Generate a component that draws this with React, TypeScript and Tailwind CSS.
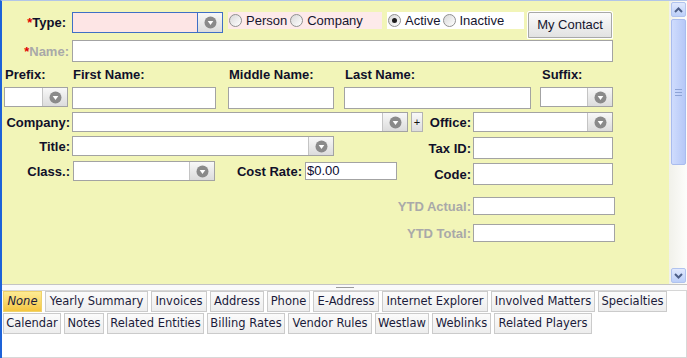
import React from "react";

const label = "whitespace-nowrap text-[13px] font-bold leading-[15px] text-[#10102a]";
const grayLabel = "whitespace-nowrap text-[13px] font-bold leading-[15px] text-[#a9a9a9]";

function Arrow() {
  return (
    <svg width="13" height="13" viewBox="0 0 13 13">
      <circle cx="6.5" cy="6.5" r="6" fill="#8a8a8a" />
      <path d="M3.7 5.1h5.6L6.5 9.1z" fill="#ffffff" />
    </svg>
  );
}

function Select({ className, blue }: { className: string; blue?: boolean }) {
  return (
    <div
      className={`flex shrink-0 border ${
        blue ? "border-[#3f6fc6] bg-[#fde5e5]" : "border-[#a3a3a3] bg-white"
      } ${className}`}
    >
      <div className="flex-1" />
      <div
        className={`flex w-[25px] items-center justify-center border-l bg-gradient-to-b from-[#f8f8f8] to-[#dcdcdc] ${
          blue ? "border-[#3f6fc6]" : "border-[#c4c4c4]"
        }`}
      >
        <Arrow />
      </div>
    </div>
  );
}

function Field({ className, children }: { className: string; children?: React.ReactNode }) {
  return (
    <div className={`shrink-0 border border-[#a3a3a3] bg-white ${className}`}>{children}</div>
  );
}

function Radio({ checked }: { checked?: boolean }) {
  return (
    <span className="flex h-[13px] w-[13px] shrink-0 items-center justify-center rounded-full border border-[#909090] bg-gradient-to-br from-[#d8d8d8] to-[#ffffff]">
      {checked && <span className="h-[5px] w-[5px] rounded-full bg-[#1e1e1e]" />}
    </span>
  );
}

function ScrollBtn({ up }: { up?: boolean }) {
  return (
    <div className="flex h-[15px] items-center justify-center rounded-[2px] border border-[#b1c3ee] bg-gradient-to-b from-[#e1e9fd] to-[#bccff9]">
      <svg width="9" height="6" viewBox="0 0 9 6">
        <path
          d={up ? "M1 5L4.5 1.5L8 5" : "M1 1L4.5 4.5L8 1"}
          fill="none"
          stroke="#4d5f88"
          strokeWidth="2"
        />
      </svg>
    </div>
  );
}

function Scrollbar() {
  return (
    <div className="flex w-[18px] shrink-0 flex-col bg-gradient-to-r from-[#f1f1ea] to-[#fdfdfb] py-[1px] pl-[2px] pr-[1px]">
      <ScrollBtn up />
      <div className="mt-[2px] flex h-[146px] flex-col items-center justify-center gap-[2px] rounded-[2px] border border-[#a9bcee] bg-gradient-to-r from-[#cfdcfd] to-[#b6c8f7]">
        <span className="h-px w-[7px] bg-[#8da3d6]" />
        <span className="h-px w-[7px] bg-[#8da3d6]" />
        <span className="h-px w-[7px] bg-[#8da3d6]" />
      </div>
      <div className="flex-1" />
      <ScrollBtn />
    </div>
  );
}

const row1 = [
  { t: "None", w: "w-[39px]", on: true },
  { t: "Yearly Summary", w: "w-[103px]" },
  { t: "Invoices", w: "w-[56px]" },
  { t: "Address", w: "w-[54px]" },
  { t: "Phone", w: "w-[43px]" },
  { t: "E-Address", w: "w-[66px]" },
  { t: "Internet Explorer", w: "w-[106px]" },
  { t: "Involved Matters", w: "w-[104px]" },
  { t: "Specialties", w: "w-[69px]" },
];

const row2 = [
  { t: "Calendar", w: "w-[58px]" },
  { t: "Notes", w: "w-[40px]" },
  { t: "Related Entities", w: "w-[97px]" },
  { t: "Billing Rates", w: "w-[78px]" },
  { t: "Vendor Rules", w: "w-[84px]" },
  { t: "Westlaw", w: "w-[54px]" },
  { t: "Weblinks", w: "w-[59px]" },
  { t: "Related Players", w: "w-[98px]" },
];

function Tab({ t, w, on }: { t: string; w: string; on?: boolean }) {
  return (
    <div
      className={`flex h-[21px] shrink-0 items-center justify-center whitespace-nowrap border text-[11.5px] text-[#1b1b3a] ${w} ${
        on
          ? "border-[#efd26a] bg-gradient-to-b from-[#fdeb93] to-[#f5c63e] italic"
          : "border-[#cbcbcb] bg-gradient-to-b from-[#fbfbfb] to-[#ededed]"
      }`}
    >
      {t}
    </div>
  );
}

export default function App() {
  return (
    <div className="flex h-[358px] w-[687px] flex-col overflow-hidden border-l-2 border-t border-l-[#1d62d8] border-t-[#b3c6e8] bg-white font-['Liberation_Sans',Arial,sans-serif]">
      <div className="flex h-[283px] shrink-0">
        <div className="flex-1 bg-[#f2f5b8]">
          {/* type row */}
          <div className="mt-[10px] flex h-[28px] items-start">
            <div className={`${label} mt-[1px] w-[64px] text-right leading-[21px]`}>
              <span className="text-[#e00000]">*</span>Type:
            </div>
            <Select blue className="ml-[6px] mt-[1px] h-[21px] w-[151px]" />
            <div className="ml-[5px] mt-[1px] flex h-[17px] w-[154px] items-center bg-[#fdeaea] pl-[1px] text-[13px] text-[#15152e]">
              <Radio />
              <span className="ml-[4px]">Person</span>
              <span className="ml-[3px]" />
              <Radio />
              <span className="ml-[4px]">Company</span>
            </div>
            <div className="ml-[5px] mt-[1px] flex h-[17px] w-[137px] items-center bg-white pl-[1px] text-[13px] text-[#15152e]">
              <Radio checked />
              <span className="ml-[4px]">Active</span>
              <span className="ml-[3px]" />
              <Radio />
              <span className="ml-[3px]">Inactive</span>
            </div>
            <div className="ml-[3px] h-[28px] w-[86px] rounded-t-[2px] border border-white p-0">
              <div className="flex h-full items-center justify-center rounded-t-[2px] border border-[#a8a8a8] bg-gradient-to-b from-[#fbfbfb] to-[#e2e2e2] text-[13px] text-[#15152e]">
                My Contact
              </div>
            </div>
          </div>

          {/* name row */}
          <div className="mt-[1px] flex items-center">
            <div className={`${grayLabel} w-[67px] text-right`}>
              <span className="text-[#e00000]">*</span>Name:
            </div>
            <Field className="ml-[3px] h-[22px] w-[541px]" />
          </div>

          {/* name parts */}
          <div className="mt-[5px] flex items-start">
            <div className="ml-[2px] flex w-[64px] flex-col">
              <div className={`${label} pl-[1px]`}>Prefix:</div>
              <Select className="mt-[5px] h-[20px] w-[64px]" />
            </div>
            <div className="ml-[4px] flex w-[144px] flex-col">
              <div className={`${label} pl-[1px]`}>First Name:</div>
              <Field className="mt-[5px] h-[22px] w-[144px]" />
            </div>
            <div className="ml-[12px] flex w-[106px] flex-col">
              <div className={`${label} pl-[1px]`}>Middle Name:</div>
              <Field className="mt-[5px] h-[22px] w-[106px]" />
            </div>
            <div className="ml-[10px] flex w-[187px] flex-col">
              <div className={`${label} pl-[1px]`}>Last Name:</div>
              <Field className="mt-[5px] h-[22px] w-[187px]" />
            </div>
            <div className="ml-[9px] flex w-[73px] flex-col">
              <div className={`${label} pl-[2px]`}>Suffix:</div>
              <Select className="mt-[5px] h-[20px] w-[73px]" />
            </div>
          </div>

          <div className="mt-[3px] flex items-start">
            {/* left block */}
            <div className="flex w-[423px] shrink-0 flex-col">
              <div className="flex h-[20px] items-center">
                <div className={`${label} w-[68px] text-right`}>Company:</div>
                <Select className="ml-[2px] h-[20px] w-[336px]" />
                <div className="ml-[3px] flex h-[20px] w-[12px] items-center justify-center border border-[#b3b3b3] bg-gradient-to-b from-[#f9f9f9] to-[#dedede] text-[11px] leading-none text-[#111]">
                  +
                </div>
              </div>
              <div className="mt-[4px] flex h-[20px] items-center">
                <div className={`${label} w-[68px] text-right`}>Title:</div>
                <Select className="ml-[2px] h-[20px] w-[262px]" />
              </div>
              <div className="mt-[5px] flex h-[20px] items-center">
                <div className={`${label} w-[68px] text-right`}>Class.:</div>
                <Select className="ml-[3px] h-[20px] w-[142px]" />
                <div className={`${label} w-[87px] text-right`}>Cost Rate:</div>
                <Field className="ml-[3px] h-[18px] w-[92px] pl-[1px] text-[13px] leading-[16px] text-[#0c0c30]">
                  $0.00
                </Field>
              </div>
            </div>

            {/* right block */}
            <div className="flex flex-col">
              <div className="flex h-[20px] items-center">
                <div className={`${label} flex w-[46px] justify-end`}>Office:</div>
                <Select className="ml-[2px] h-[20px] w-[140px]" />
              </div>
              <div className="mt-[5px] flex h-[22px] items-center">
                <div className={`${label} flex w-[46px] justify-end`}>Tax ID:</div>
                <Field className="ml-[2px] h-[22px] w-[140px]" />
              </div>
              <div className="mt-[4px] flex h-[22px] items-center">
                <div className={`${label} flex w-[46px] justify-end`}>Code:</div>
                <Field className="ml-[2px] h-[22px] w-[140px]" />
              </div>
              <div className="mt-[12px] flex h-[18px] items-center">
                <div className={`${grayLabel} flex w-[46px] justify-end`}>
                  <span>YTD Actual:</span>
                </div>
                <Field className="ml-[2px] h-[18px] w-[142px]" />
              </div>
              <div className="mt-[9px] flex h-[18px] items-center">
                <div className={`${grayLabel} flex w-[46px] justify-end`}>
                  <span>YTD Total:</span>
                </div>
                <Field className="ml-[2px] h-[18px] w-[142px]" />
              </div>
            </div>
          </div>
        </div>
        <Scrollbar />
      </div>

      {/* splitter */}
      <div className="flex h-[7px] shrink-0 items-center justify-center border-y border-t-[#c4c4c4] border-b-[#d6d6d6] bg-[#fafafa]">
        <span className="h-px w-[18px] bg-[#9a9a9a]" />
      </div>

      {/* tabs */}
      <div className="flex flex-1 flex-col gap-[1px] border-b border-r border-[#d8d8d8] pl-[1px] font-['DejaVu_Sans',Verdana,sans-serif]">
        <div className="flex gap-[3px]">
          {row1.map((t) => (
            <Tab key={t.t} {...t} />
          ))}
        </div>
        <div className="flex gap-[3px]">
          {row2.map((t) => (
            <Tab key={t.t} {...t} />
          ))}
        </div>
      </div>
    </div>
  );
}
